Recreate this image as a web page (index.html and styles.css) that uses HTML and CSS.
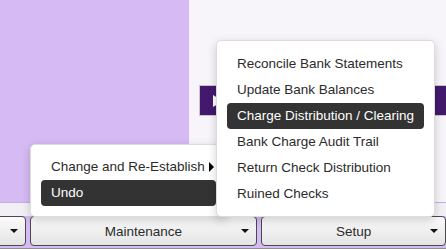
FILE: index.html
```html
<!DOCTYPE html>
<html>
<head>
    <title>Bank Menus</title>
    <link rel="stylesheet" href="styles.css">
</head>
<body>
    <div class="screen">
        <div class="workspace">
            <div class="side-panel"></div>
            <div class="main-panel">
                <div class="title-bar">
                    <svg class="play-icon" width="10" height="12" viewBox="0 0 10 12"><polygon points="0,0 10,6 0,12" fill="#fff"/></svg>
                </div>
            </div>
        </div>
        <div class="toolbar-band"></div>
        <div class="toolbar">
            <button class="tool-btn first"><span class="caret"></span></button>
            <button class="tool-btn wide">Maintenance<span class="caret"></span></button>
            <button class="tool-btn last">Setup<span class="caret"></span></button>
        </div>
        <div class="status-strip"></div>

        <ul class="menu maintenance-menu">
            <li class="menu-item">Change and Re-Establish
                <svg class="sub-arrow" width="5" height="10" viewBox="0 0 5 10"><polygon points="0,0 5,5 0,10" fill="#000"/></svg>
            </li>
            <li class="menu-item active">Undo</li>
        </ul>

        <ul class="menu setup-menu">
            <li class="menu-item">Reconcile Bank Statements</li>
            <li class="menu-item">Update Bank Balances</li>
            <li class="menu-item active">Charge Distribution / Clearing</li>
            <li class="menu-item">Bank Charge Audit Trail</li>
            <li class="menu-item">Return Check Distribution</li>
            <li class="menu-item">Ruined Checks</li>
        </ul>
    </div>
</body>
</html>
```

FILE: styles.css
```css
body {
    margin: 0;
    font-family: "Liberation Sans", Arial, sans-serif;
    background: #8f8f8f;
}

.screen {
    position: relative;
    width: 446px;
    height: 249px;
    overflow: hidden;
    background: #d6baf3;
}

.workspace {
    display: flex;
    height: 202px;
    border-bottom: 1px solid #c7aee2;
}

.side-panel {
    width: 189px;
    background: #d6baf3;
}

.main-panel {
    flex: 1;
    background: #f7f5f9;
    padding: 85px 0 0 10px;
}

.title-bar {
    height: 29px;
    background: #43196e;
    border: 1px solid #c9c6cc;
    border-right: none;
    display: flex;
    align-items: center;
    padding-left: 13px;
}

.toolbar-band {
    height: 13px;
    background: #f2f0f4;
}

.toolbar {
    display: flex;
    gap: 4px;
    height: 31px;
    padding-bottom: 1px;
    background: #d6baf3;
}

.status-strip {
    height: 2px;
    background: #8f8f8f;
}

.tool-btn {
    position: relative;
    height: 30px;
    border: 1px solid #4a4a4a;
    border-radius: 4px;
    background: linear-gradient(#fbfbfb, #e4e4e4);
    font-family: "Liberation Sans", Arial, sans-serif;
    font-size: 13.5px;
    color: #2b2b2b;
    padding: 0;
}

.tool-btn.first {
    width: 40px;
    margin-left: -14px;
}

.tool-btn.wide {
    width: 229px;
}

.tool-btn.last {
    width: 186px;
}

.caret {
    position: absolute;
    right: 7px;
    top: 12px;
    width: 0;
    height: 0;
    border-left: 4px solid transparent;
    border-right: 4px solid transparent;
    border-top: 4px solid #111;
}

.menu {
    position: absolute;
    margin: 0;
    list-style: none;
    background: #fff;
    border: 1px solid #dcdcdc;
    border-radius: 5px;
    box-shadow: 0 3px 10px rgba(0, 0, 0, 0.18);
}

.maintenance-menu {
    left: 30px;
    top: 144px;
    width: 175px;
    padding: 9px 10px 10px;
}

.setup-menu {
    left: 216px;
    top: 40px;
    width: 197px;
    padding: 10px 10px 9px;
}

.menu-item {
    position: relative;
    height: 26px;
    line-height: 26px;
    padding-left: 10px;
    font-size: 13.5px;
    color: #2b2b2b;
    border-radius: 4px;
    white-space: nowrap;
}

.menu-item.active {
    background: #333;
    color: #fff;
}

.sub-arrow {
    position: absolute;
    right: 2px;
    top: 8px;
}
```
